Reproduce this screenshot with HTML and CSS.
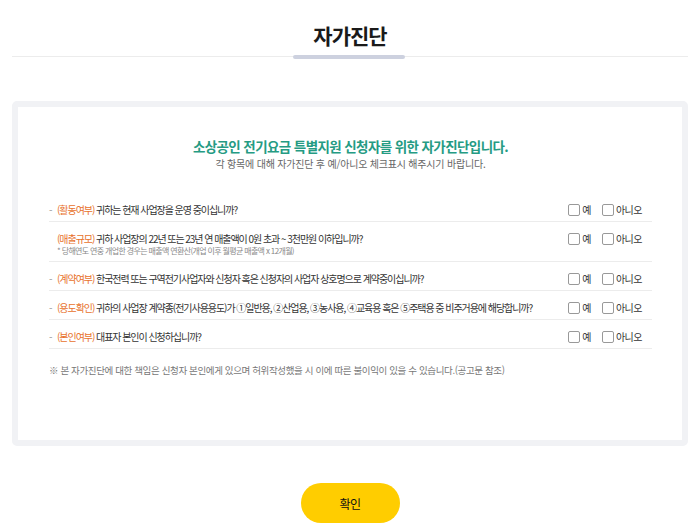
FILE: index.html
```html
<!DOCTYPE html>
<html lang="ko">
<head>
<meta charset="utf-8">
<title>자가진단</title>
<link rel="stylesheet" href="styles.css">
</head>
<body>
<div class="page">
  <header class="page-head">
    <h1 class="page-title">자가진단</h1>
  </header>

  <section class="card">
    <div class="card-inner">
      <h2 class="intro-title">소상공인 전기요금 특별지원 신청자를 위한 자가진단입니다.</h2>
      <p class="intro-sub">각 항목에 대해 자가진단 후 예/아니오 체크표시 해주시기 바랍니다.</p>

      <ul class="q-list">
        <li class="q-row">
          <div class="q-text"><span class="dash">-</span><span class="tag">(활동여부)</span> 귀하는 현재 사업장을 운영 중이십니까?</div>
          <div class="q-opts">
            <label class="opt"><input type="checkbox" class="chk"><span>예</span></label>
            <label class="opt"><input type="checkbox" class="chk"><span>아니오</span></label>
          </div>
        </li>
        <li class="q-row">
          <div class="q-text"><span class="dash blank"></span><span class="tag">(매출규모)</span> 귀하 사업장의 22년 또는 23년 연 매출액이 0원 초과 ~ 3천만원 이하입니까?
            <span class="q-note">* 당해연도 연중 개업한 경우는 매출액 연환산(개업 이후 월평균 매출액 x 12개월)</span>
          </div>
          <div class="q-opts">
            <label class="opt"><input type="checkbox" class="chk"><span>예</span></label>
            <label class="opt"><input type="checkbox" class="chk"><span>아니오</span></label>
          </div>
        </li>
        <li class="q-row">
          <div class="q-text"><span class="dash">-</span><span class="tag">(계약여부)</span> 한국전력 또는 구역전기사업자와 신청자 혹은 신청자의 사업자 상호명으로 계약중이십니까?</div>
          <div class="q-opts">
            <label class="opt"><input type="checkbox" class="chk"><span>예</span></label>
            <label class="opt"><input type="checkbox" class="chk"><span>아니오</span></label>
          </div>
        </li>
        <li class="q-row">
          <div class="q-text"><span class="dash">-</span><span class="tag">(용도확인)</span> 귀하의 사업장 계약종(전기사용용도)가 ①일반용, ②산업용, ③농사용, ④교육용 혹은 ⑤주택용 중 비주거용에 해당합니까?</div>
          <div class="q-opts">
            <label class="opt"><input type="checkbox" class="chk"><span>예</span></label>
            <label class="opt"><input type="checkbox" class="chk"><span>아니오</span></label>
          </div>
        </li>
        <li class="q-row">
          <div class="q-text"><span class="dash">-</span><span class="tag">(본인여부)</span> 대표자 본인이 신청하십니까?</div>
          <div class="q-opts">
            <label class="opt"><input type="checkbox" class="chk"><span>예</span></label>
            <label class="opt"><input type="checkbox" class="chk"><span>아니오</span></label>
          </div>
        </li>
      </ul>

      <p class="disclaimer">※ 본 자가진단에 대한 책임은 신청자 본인에게 있으며 허위작성했을 시 이에 따른 불이익이 있을 수 있습니다.(공고문 참조)</p>
    </div>
  </section>

  <div class="actions">
    <button type="button" class="btn-confirm">확인</button>
  </div>
</div>
</body>
</html>
```

FILE: styles.css
```css
* { box-sizing: border-box; }

html, body {
  margin: 0;
  padding: 0;
  background: #ffffff;
}

body {
  font-family: "Noto Sans CJK KR", "Noto Sans", sans-serif;
  color: #222;
}

.page {
  padding: 0 12px;
}

.page-head {
  position: relative;
  padding: 20px 0 6px;
  border-bottom: 1px solid #ececec;
  text-align: center;
}

.page-head::after {
  content: "";
  position: absolute;
  left: 50%;
  bottom: -3px;
  width: 112px;
  margin-left: -57px;
  height: 4px;
  border-radius: 2px;
  background: #cdd1df;
}

.page-title {
  margin: 0;
  font-size: 21px;
  line-height: 30px;
  font-weight: 700;
  letter-spacing: -1px;
  color: #1a1a1a;
}

.card {
  margin-top: 44px;
  border: 6px solid #f1f2f5;
  border-radius: 5px;
  background: #fff;
}

.card-inner {
  padding: 30px 30px 64px 31px;
}

.intro-title {
  margin: 0;
  text-align: center;
  font-size: 13.5px;
  line-height: 18px;
  font-weight: 700;
  letter-spacing: -0.6px;
  color: #259b83;
}

.intro-sub {
  margin: 2px 0 0;
  text-align: center;
  font-size: 10px;
  line-height: 14px;
  letter-spacing: -0.2px;
  color: #666;
}

.q-list {
  list-style: none;
  margin: 22px 0 0;
  padding: 0;
}

.q-row {
  display: flex;
  align-items: flex-start;
  justify-content: space-between;
  padding: 10px 10px 5px 0;
  border-bottom: 1px solid #ececec;
}

.q-text {
  font-size: 10px;
  line-height: 13px;
  letter-spacing: -1.05px;
  color: #333;
}

.dash {
  display: inline-block;
  width: 8px;
  color: #999;
}

.tag {
  color: #e8722c;
}

.q-note {
  display: block;
  padding-left: 8px;
  font-size: 8px;
  line-height: 11px;
  letter-spacing: -0.65px;
  color: #888;
}

.q-opts {
  display: flex;
  gap: 11px;
  flex-shrink: 0;
}

.opt {
  display: flex;
  align-items: center;
  gap: 2px;
  font-size: 10px;
  line-height: 13px;
  letter-spacing: -0.5px;
  color: #333;
}

.chk {
  appearance: none;
  -webkit-appearance: none;
  margin: 0;
  width: 12px;
  height: 12px;
  border: 1px solid #999;
  border-radius: 2px;
  background: #fff;
}

.disclaimer {
  margin: 15px 0 0;
  font-size: 9.5px;
  line-height: 12px;
  letter-spacing: -0.37px;
  color: #777;
}

.actions {
  display: flex;
  justify-content: center;
  margin-top: 37px;
}

.btn-confirm {
  width: 99px;
  height: 40px;
  border: none;
  border-radius: 20px;
  background: #ffcd00;
  font-family: inherit;
  font-size: 12px;
  letter-spacing: -0.5px;
  color: #111;
}
```
